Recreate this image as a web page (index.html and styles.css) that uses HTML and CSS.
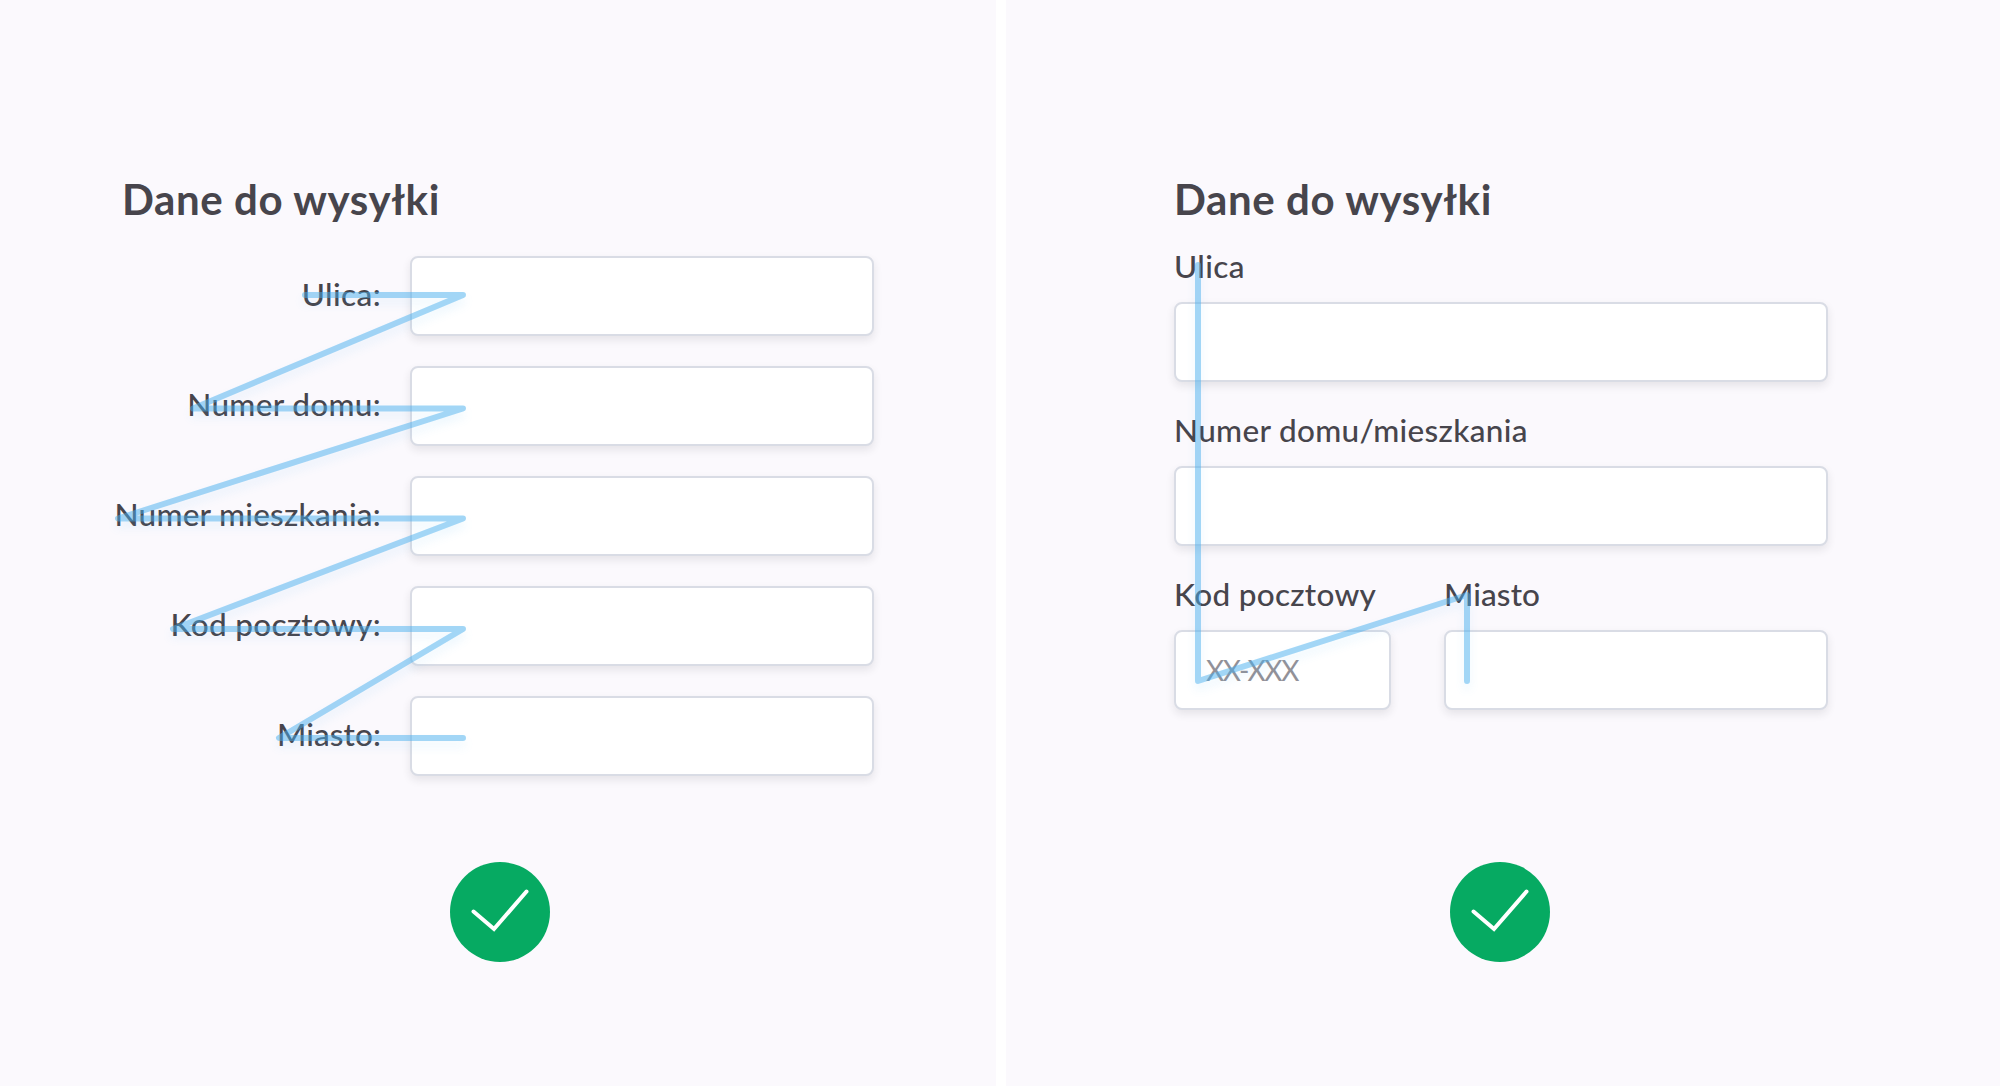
FILE: index.html
```html
<!DOCTYPE html>
<html lang="pl">
<head>
<meta charset="utf-8">
<title>Dane do wysyłki</title>
<link rel="stylesheet" href="styles.css">
</head>
<body>
<main class="comparison">
  <section class="panel panel-inline">
    <form class="form">
      <h2 class="title">Dane do wysyłki</h2>
      <div class="rows">
        <label class="label ulica" for="a1">Ulica:</label><input class="input" id="a1">
        <label class="label dom" for="a2">Numer domu:</label><input class="input" id="a2">
        <label class="label mieszkanie" for="a3">Numer mieszkania:</label><input class="input" id="a3">
        <label class="label kod" for="a4">Kod pocztowy:</label><input class="input" id="a4">
        <label class="label miasto" for="a5">Miasto:</label><input class="input" id="a5">
      </div>
    </form>
    <svg class="badge" viewBox="0 0 100 100"><circle cx="50" cy="50" r="50"/><path d="M23.5 49.5 44 67 76.5 29.5"/></svg>
    <svg class="trail" viewBox="0 0 996 1086"><path d="M305 295H463L193 408.5H463L118 518.5H463L173 629H463L279 738H463"/></svg>
  </section>
  <section class="panel panel-stacked">
    <form class="form">
      <h2 class="title">Dane do wysyłki</h2>
      <div class="fields">
        <div class="field wide"><label class="label ulica" for="b1">Ulica</label><input class="input" id="b1"></div>
        <div class="field wide"><label class="label dom" for="b2">Numer domu/mieszkania</label><input class="input" id="b2"></div>
        <div class="field"><label class="label kod" for="b3">Kod pocztowy</label><input class="input" id="b3" placeholder="XX-XXX"></div>
        <div class="field"><label class="label miasto" for="b4">Miasto</label><input class="input" id="b4"></div>
      </div>
    </form>
    <svg class="badge" viewBox="0 0 100 100"><circle cx="50" cy="50" r="50"/><path d="M23.5 49.5 44 67 76.5 29.5"/></svg>
    <svg class="trail" viewBox="0 0 994 1086"><path d="M192 265V681L461 595V681"/></svg>
  </section>
</main>
</body>
</html>
```
FILE: styles.css
```css
* { box-sizing: border-box; }
body {
  margin: 0;
  background: #fff;
  color: #47454c;
  font-family: Lato, "Liberation Sans", sans-serif;
}
.comparison {
  display: grid;
  grid-template-columns: 996px 994px;
  gap: 10px;
  height: 1086px;
  overflow: hidden;
}
.panel {
  position: relative;
  padding-top: 175px;
  background: #fbf9fd;
}
.form { height: 687px; }
.title {
  margin: 0;
  font-size: 42px;
  font-weight: 700;
  line-height: 48px;
  letter-spacing: .6px;
  white-space: nowrap;
}
.label {
  font-size: 31.5px;
  font-weight: 500;
  line-height: 40px;
  white-space: nowrap;
}
.ulica { letter-spacing: .4px; }
.dom { letter-spacing: .32px; }
.mieszkanie { letter-spacing: .25px; }
.kod { letter-spacing: .3px; }
.miasto { letter-spacing: .1px; }
.input {
  display: block;
  width: 100%;
  height: 80px;
  padding: 0 30px 1px;
  border: 2px solid #d9dce5;
  border-radius: 8px;
  background: #fff;
  box-shadow: 0 4px 9px rgba(40, 35, 50, .1);
  font: 400 28px Lato, sans-serif;
  letter-spacing: -1.3px;
  outline: none;
}
.input::placeholder { color: #929198; }

.panel-inline .title { padding-left: 122px; }
.rows {
  display: grid;
  grid-template-columns: 381px 464px;
  column-gap: 29px;
  row-gap: 30px;
  margin-top: 33px;
}
.rows .label {
  align-self: center;
  padding-bottom: 4px;
  text-align: right;
}

.panel-stacked .form { padding-left: 168px; }
.fields {
  display: grid;
  grid-template-columns: 217px 384px;
  column-gap: 53px;
  row-gap: 28px;
  margin-top: 23px;
}
.wide { grid-column: 1 / 3; }
.field {
  display: flex;
  flex-direction: column;
  gap: 16px;
}

.badge {
  display: block;
  width: 100px;
  height: 100px;
  margin-left: 450px;
}
.panel-stacked .badge { margin-left: 444px; }
.badge circle { fill: #06aa62; }
.badge path {
  fill: none;
  stroke: #fff;
  stroke-width: 4;
  stroke-linecap: round;
}
.trail {
  position: absolute;
  inset: 0;
  width: 100%;
  height: 100%;
  pointer-events: none;
}
.trail path {
  fill: none;
  stroke: #47afef;
  stroke-width: 6;
  stroke-linecap: round;
  stroke-linejoin: round;
  opacity: .5;
  filter: drop-shadow(0 6px 5px rgba(71, 175, 239, .2));
}
```
